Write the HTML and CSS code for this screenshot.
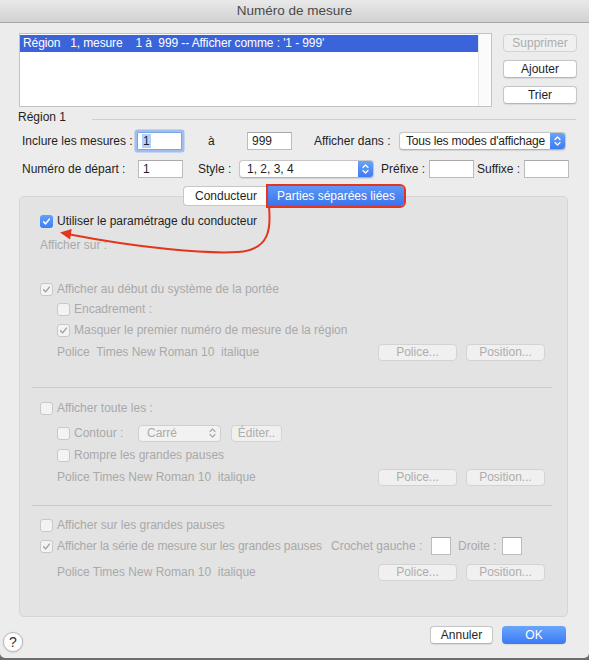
FILE: index.html
```html
<!DOCTYPE html>
<html lang="fr">
<head>
<meta charset="utf-8">
<title>Numéro de mesure</title>
<link rel="stylesheet" href="styles.css">
</head>
<body>
<div class="window">
  <div class="titlebar">Numéro de mesure</div>

  <div class="top">
    <div class="list">
      <div class="list-rows">
        <div class="list-row sel">Région   1, mesure    1 à  999 -- Afficher comme : '1 - 999'</div>
      </div>
      <div class="list-scroll"></div>
    </div>
    <div class="side-btns">
      <div class="btn side disabled">Supprimer</div>
      <div class="btn side">Ajouter</div>
      <div class="btn side">Trier</div>
    </div>
  </div>

  <div class="region-head"><span class="region-title">Région 1</span><div class="hline"></div></div>

  <div class="frow r1">
    <span class="lbl l-incl">Inclure les mesures :</span>
    <div class="field focus"><span class="seltext">1</span></div>
    <span class="lbl l-a">à</span>
    <div class="field">999</div>
    <span class="lbl l-aff">Afficher dans :</span>
    <div class="popup p-modes"><span class="ptext">Tous les modes d'affichage</span><span class="parrows"><svg viewBox="0 0 9 14" width="9" height="14"><path d="M2 5.5 L4.5 3 L7 5.5 M2 8.5 L4.5 11 L7 8.5" fill="none" stroke="#fff" stroke-width="1.3" stroke-linecap="round" stroke-linejoin="round"/></svg></span></div>
  </div>

  <div class="frow r2">
    <span class="lbl l-num">Numéro de départ :</span>
    <div class="field">1</div>
    <span class="lbl l-style">Style :</span>
    <div class="popup p-style"><span class="ptext">1, 2, 3, 4</span><span class="parrows"><svg viewBox="0 0 9 14" width="9" height="14"><path d="M2 5.5 L4.5 3 L7 5.5 M2 8.5 L4.5 11 L7 8.5" fill="none" stroke="#fff" stroke-width="1.3" stroke-linecap="round" stroke-linejoin="round"/></svg></span></div>
    <span class="lbl l-pre">Préfixe :</span>
    <div class="field"></div>
    <span class="lbl l-suf">Suffixe :</span>
    <div class="field"></div>
  </div>

  <div class="tabs">
    <div class="tab">Conducteur</div>
    <div class="tab active">Parties séparées liées</div>
  </div>

  <div class="panel">
    <div class="prow p1">
      <span class="cb on"><svg viewBox="0 0 12 12" width="11" height="11"><path d="M2.8 6.3 L5 8.6 L9.2 3.4" fill="none" stroke="#fff" stroke-width="1.7" stroke-linecap="round" stroke-linejoin="round"/></svg></span>
      <span class="ctext">Utiliser le paramétrage du conducteur</span>
    </div>
    <div class="prow p2 dim">Afficher sur :</div>

    <div class="prow p3 dim">
      <span class="cb dis"><svg viewBox="0 0 12 12" width="11" height="11"><path d="M2.8 6.3 L5 8.6 L9.2 3.4" fill="none" stroke="#9e9e9e" stroke-width="1.5" stroke-linecap="round" stroke-linejoin="round"/></svg></span>
      <span class="ctext">Afficher au début du système de la portée</span>
    </div>
    <div class="prow p4 dim ind">
      <span class="cb dis"></span>
      <span class="ctext">Encadrement :</span>
    </div>
    <div class="prow p5 dim ind">
      <span class="cb dis"><svg viewBox="0 0 12 12" width="11" height="11"><path d="M2.8 6.3 L5 8.6 L9.2 3.4" fill="none" stroke="#9e9e9e" stroke-width="1.5" stroke-linecap="round" stroke-linejoin="round"/></svg></span>
      <span class="ctext">Masquer le premier numéro de mesure de la région</span>
    </div>
    <div class="prow p6 dim ind">
      <span class="ptxt">Police  Times New Roman 10  italique</span>
      <div class="pbtns"><div class="btn small disabled">Police...</div><div class="btn small disabled">Position...</div></div>
    </div>

    <div class="sep s1"></div>

    <div class="prow p8 dim">
      <span class="cb dis"></span>
      <span class="ctext">Afficher toute les :</span>
    </div>
    <div class="prow p9 dim ind">
      <span class="cb dis"></span>
      <span class="ctext l-contour">Contour :</span>
      <div class="popup dis p-carre"><span class="ptext">Carré</span><span class="parrows"><svg viewBox="0 0 9 14" width="9" height="14"><path d="M2 5.5 L4.5 3 L7 5.5 M2 8.5 L4.5 11 L7 8.5" fill="none" stroke="#a8a8a8" stroke-width="1.2" stroke-linecap="round" stroke-linejoin="round"/></svg></span></div>
      <div class="btn small disabled b-edit">Éditer..</div>
    </div>
    <div class="prow p10 dim ind">
      <span class="cb dis"></span>
      <span class="ctext">Rompre les grandes pauses</span>
    </div>
    <div class="prow p11 dim ind">
      <span class="ptxt">Police Times New Roman 10  italique</span>
      <div class="pbtns"><div class="btn small disabled">Police...</div><div class="btn small disabled">Position...</div></div>
    </div>

    <div class="sep s2"></div>

    <div class="prow p13 dim">
      <span class="cb dis"></span>
      <span class="ctext">Afficher sur les grandes pauses</span>
    </div>
    <div class="prow p14 dim">
      <span class="cb dis"><svg viewBox="0 0 12 12" width="11" height="11"><path d="M2.8 6.3 L5 8.6 L9.2 3.4" fill="none" stroke="#9e9e9e" stroke-width="1.5" stroke-linecap="round" stroke-linejoin="round"/></svg></span>
      <span class="ctext l-serie">Afficher la série de mesure sur les grandes pauses</span>
      <span class="l-croch">Crochet gauche :</span>
      <div class="field tiny"></div>
      <span class="l-droite">Droite :</span>
      <div class="field tiny"></div>
    </div>
    <div class="prow p15 dim ind">
      <span class="ptxt">Police Times New Roman 10  italique</span>
      <div class="pbtns"><div class="btn small disabled">Police...</div><div class="btn small disabled">Position...</div></div>
    </div>
  </div>

  <div class="bottom">
    <div class="help">?</div>
    <div class="bbtns">
      <div class="btn b-cancel">Annuler</div>
      <div class="btn b-ok">OK</div>
    </div>
  </div>

  <svg class="annot" viewBox="0 0 589 660" width="589" height="660">
    <path d="M269 207 C271 228, 270 250, 238 252 C205 254, 140 248, 70 234.5" fill="none" stroke="#e5341d" stroke-width="2"/>
    <path d="M60 232.5 L71.7 229 L70.1 239.4 Z" fill="#e5341d"/>
  </svg>
</div>
</body>
</html>
```

FILE: styles.css
```css
* { box-sizing: border-box; }
html, body { margin: 0; padding: 0; }
body {
  width: 589px;
  height: 660px;
  overflow: hidden;
  background: #6c6c6c;
  font-family: "Liberation Sans", Arial, sans-serif;
  font-size: 12px;
  color: #1f1f1f;
}
.window {
  position: relative;
  width: 589px;
  height: 658px;
  background: #ececec;
  border-radius: 0 0 5px 5px;
  display: flex;
  flex-direction: column;
}
.titlebar {
  height: 23px;
  flex: none;
  background: linear-gradient(#e9e9e9, #d2d2d2);
  border-bottom: 1px solid #a8a8a8;
  text-align: center;
  line-height: 22px;
  font-size: 13.5px;
  color: #4a4a4a;
}

/* top list */
.top { display: flex; padding: 10px 0 0 19px; flex: none; }
.list {
  width: 473px;
  height: 74px;
  background: #fff;
  border: 1px solid #c3c3c3;
  display: flex;
}
.list-rows { flex: 1; padding-top: 1px; }
.list-row { height: 17px; line-height: 17px; padding-left: 3px; white-space: pre; letter-spacing: -0.1px; }
.list-row.sel { background: #3b64db; color: #fff; }
.list-scroll { width: 13px; border-left: 1px solid #e4e4e4; background: #fbfbfb; }
.side-btns { display: flex; flex-direction: column; gap: 8px; margin-left: 11px; padding-top: 1px; }

.btn {
  display: flex;
  align-items: center;
  justify-content: center;
  background: #fff;
  border: 1px solid #c6c6c6;
  border-bottom-color: #b5b5b5;
  border-radius: 4px;
  box-shadow: 0 0.5px 1px rgba(0,0,0,0.08);
  color: #1f1f1f;
  white-space: nowrap;
}
.btn.side { width: 74px; height: 18px; }
.btn.disabled {
  background: #f0f0f0;
  border-color: #d3d3d3;
  color: #adadad;
  box-shadow: none;
}

/* region */
.region-head { display: flex; align-items: flex-start; height: 18px; margin-top: 1px; padding-left: 18px; flex: none; }
.region-title { line-height: 18px; }
.hline { flex: 1; height: 1px; background: #cfcfcf; margin: 11px 13px 0 26px; }

/* form rows */
.frow { display: flex; align-items: center; height: 18px; padding-left: 22px; flex: none; }
.r1 { margin-top: 6px; }
.r2 { margin-top: 10px; }
.lbl { white-space: nowrap; }
.l-incl { width: 115px; }
.l-a { margin-left: 26px; width: 39px; }
.l-aff { margin-left: 22px; width: 85px; }
.l-num { width: 116px; }
.l-style { margin-left: 15px; width: 41px; }
.l-pre { margin-left: 7px; width: 48px; }
.l-suf { margin-left: 3px; width: 47px; }

.field {
  width: 45px;
  height: 18px;
  background: #fff;
  border: 1px solid #bcbcbc;
  border-top-color: #a9a9a9;
  padding-left: 4px;
  line-height: 16px;
  flex: none;
}
.field.focus {
  border: 1px solid #7ba3e6;
  border-radius: 1px;
  box-shadow: 0 0 0 2.5px rgba(112, 160, 238, 0.6);
}
.seltext { background: #b3d2fb; padding: 0 1px; }
.field.tiny { width: 20px; }

.popup {
  display: flex;
  align-items: center;
  height: 18px;
  background: #fff;
  border: 1px solid #c6c6c6;
  border-bottom-color: #b3b3b3;
  border-radius: 4px;
  box-shadow: 0 0.5px 1px rgba(0,0,0,0.1);
  flex: none;
  overflow: hidden;
}
.popup .ptext { flex: 1; padding-left: 7px; white-space: nowrap; overflow: hidden; }
.popup .parrows {
  width: 15px;
  flex: none;
  align-self: stretch;
  display: flex;
  align-items: center;
  justify-content: center;
  background: linear-gradient(#69a3f9, #3c7cf1);
}
.p-modes { width: 167px; }
.p-modes .ptext { padding-left: 6px; letter-spacing: -0.2px; }
.p-style { width: 135px; }
.popup.dis {
  background: #f2f2f2;
  border-color: #cfcfcf;
  box-shadow: none;
  color: #aaa;
}
.popup.dis .parrows { background: none; }
.p-carre { width: 83px; height: 17px; margin-left: 0; }
.p-carre .ptext { padding-left: 8px; }

/* tabs */
.tabs {
  display: flex;
  justify-content: center;
  margin: 8px 21px 0 19px;
  height: 20px;
  position: relative;
  z-index: 2;
  flex: none;
}
.tab {
  height: 20px;
  display: flex;
  align-items: center;
  justify-content: center;
  background: #fff;
  border: 1px solid #c6c6c6;
  border-right: none;
  border-radius: 4px 0 0 4px;
  width: 85px;
  color: #1f1f1f;
}
.tab.active {
  width: 136px;
  border: none;
  border-radius: 0 4px 4px 0;
  background: linear-gradient(#5f97f8, #3a73ed);
  color: #fff;
  outline: 2px solid #e5341d;
}

/* panel */
.panel {
  margin: -10px 21px 0 19px;
  height: 421px;
  background: #e3e3e3;
  border: 1px solid #d5d5d5;
  border-radius: 5px;
  padding: 14px 22px 0 20px;
  flex: none;
}
.prow { display: flex; align-items: center; height: 20px; white-space: nowrap; }
.dim { color: #a9a9a9; }
.ind { padding-left: 17px; }
.p2 { margin-top: 4px; }
.p3 { margin-top: 24px; }
.p5 { margin-top: 1px; }
.p6 { margin-top: 2px; }
.p8 { margin-top: 10px; }
.p9 { margin-top: 5px; }
.p10 { margin-top: 2px; }
.p11 { margin-top: 2px; }
.p13 { margin-top: 9px; }
.p14 { margin-top: 1px; }
.p15 { margin-top: 6px; }

.sep { height: 1px; background: #cbcbcb; margin-left: -8px; margin-right: -7px; }
.s1 { margin-top: 25px; }
.s2 { margin-top: 18px; }

.cb {
  width: 13px;
  height: 13px;
  border-radius: 3px;
  flex: none;
  display: inline-flex;
  align-items: center;
  justify-content: center;
}
.cb.on { background: linear-gradient(#62a0fa, #3a7ef4); }
.cb.dis { background: #f3f3f3; border: 1px solid #c8c8c8; }
.ctext { margin-left: 4px; }
.p1 .ctext { color: #1f1f1f; }

.ptxt { white-space: pre; }
.pbtns { margin-left: auto; display: flex; gap: 9px; }
.btn.small { width: 79px; height: 17px; }
.l-contour { width: 64px; flex: none; }
.b-edit { width: 51px !important; margin-left: 10px; }

.l-serie { width: 274px; flex: none; letter-spacing: -0.1px; }
.l-croch { width: 100px; flex: none; }
.l-droite { margin-left: 7px; width: 44px; flex: none; }

/* bottom */
.bottom { display: flex; align-items: flex-start; margin-top: 9px; flex: none; }
.help {
  width: 20px;
  height: 20px;
  margin: 6px 0 0 3px;
  border-radius: 50%;
  background: #fff;
  border: 1px solid #bdbdbd;
  box-shadow: 0 0.5px 1.5px rgba(0,0,0,0.2);
  display: flex;
  align-items: center;
  justify-content: center;
  font-size: 14px;
  color: #333;
}
.bbtns { margin-left: auto; margin-right: 23px; display: flex; gap: 9px; }
.b-cancel { width: 63px; height: 18px; }
.b-ok {
  width: 64px;
  height: 18px;
  border: none;
  background: linear-gradient(#6aa5fb, #3a7af3);
  color: #fff;
}

.annot { position: absolute; left: 0; top: 0; pointer-events: none; }
```
